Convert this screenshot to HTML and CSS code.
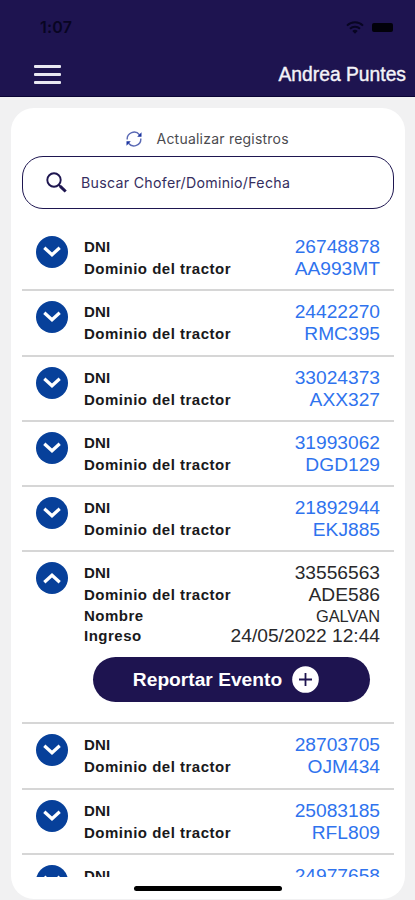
FILE: index.html
```html
<!DOCTYPE html>
<html lang="es">
<head>
<meta charset="utf-8">
<title>Registros</title>
<link rel="stylesheet" href="styles.css">
</head>
<body>
<svg class="defs" width="0" height="0">
  <symbol id="down" viewBox="0 0 32 32"><circle cx="16" cy="16" r="16" fill="#07409a"/><path d="M8.3 11.700 16 18.800l7.700-7.100" fill="none" stroke="#fff" stroke-width="3.200"/></symbol>
  <symbol id="up" viewBox="0 0 32 32"><circle cx="16" cy="16" r="16" fill="#07409a"/><path d="M8.300 20.300 16 13.200l7.700 7.100" fill="none" stroke="#fff" stroke-width="3.200"/></symbol>
</svg>
<header class="header">
  <div class="status">
    <span class="time">1:07</span>
    <span class="indicators">
      <svg class="wifi" width="18" height="13" viewBox="0 0 18 13" fill="none" stroke="#080522" stroke-width="2"><path d="M1 4.600a11.500 11.500 0 0 1 16 0M4 7.800a7.200 7.200 0 0 1 10 0"/><path d="M6.300 10a3.800 3.800 0 0 1 5.400 0L9 12.700z" fill="#080522" stroke="none"/></svg>
      <span class="battery"></span>
    </span>
  </div>
  <div class="bar">
    <div class="menu"><span></span><span></span><span></span></div>
    <span class="user">Andrea Puntes</span>
  </div>
</header>
<main class="card">
  <div class="refresh">
    <svg width="16" height="16" viewBox="0 0 16 16" fill="none" stroke="#5a69b4" stroke-width="1.400"><path d="M1.200 8.500A6.900 6.900 0 0 1 13.500 3.800M14.800 7.500A6.900 6.900 0 0 1 2.500 12.200"/><path d="M15.500 1.300v4.500h-4.300zM.5 14.700v-4.500h4.300z" fill="#1c35a0" stroke="none"/></svg>
    <span>Actualizar registros</span>
  </div>
  <div class="search">
    <svg width="21" height="21" viewBox="0 0 21 21" fill="none" stroke="#1e1650"><circle cx="8" cy="8" r="6.700" stroke-width="1.900"/><path d="m12.700 12.700 2 2" stroke-width="2"/><path d="m14.300 14.300 5.400 5.200" stroke-width="3"/></svg>
    <span>Buscar Chofer/Dominio/Fecha</span>
  </div>
  <div class="list">
    <div class="row"><svg class="toggle"><use href="#down"/></svg><div class="fields"><p><b>DNI</b><span>26748878</span></p><p><b class="wide">Dominio del tractor</b><span>AA993MT</span></p></div></div>
    <div class="row"><svg class="toggle"><use href="#down"/></svg><div class="fields"><p><b>DNI</b><span>24422270</span></p><p><b class="wide">Dominio del tractor</b><span>RMC395</span></p></div></div>
    <div class="row"><svg class="toggle"><use href="#down"/></svg><div class="fields"><p><b>DNI</b><span>33024373</span></p><p><b class="wide">Dominio del tractor</b><span>AXX327</span></p></div></div>
    <div class="row"><svg class="toggle"><use href="#down"/></svg><div class="fields"><p><b>DNI</b><span>31993062</span></p><p><b class="wide">Dominio del tractor</b><span>DGD129</span></p></div></div>
    <div class="row"><svg class="toggle"><use href="#down"/></svg><div class="fields"><p><b>DNI</b><span>21892944</span></p><p><b class="wide">Dominio del tractor</b><span>EKJ885</span></p></div></div>
    <div class="row open">
      <svg class="toggle"><use href="#up"/></svg>
      <div class="fields"><p><b>DNI</b><span>33556563</span></p><p><b class="wide">Dominio del tractor</b><span>ADE586</span></p><p class="tight"><b class="wide">Nombre</b><span class="name">GALVAN</span></p><p class="tight"><b class="wide">Ingreso</b><span class="date">24/05/2022 12:44</span></p></div>
      <div class="report"><span>Reportar Evento</span><svg width="27" height="27" viewBox="0 0 27 27"><circle cx="13.500" cy="13.500" r="13.300" fill="#fff"/><path d="M13.500 7v13M7 13.500h13" stroke="#1e1450" stroke-width="1.800"/></svg></div>
    </div>
    <div class="row"><svg class="toggle"><use href="#down"/></svg><div class="fields"><p><b>DNI</b><span>28703705</span></p><p><b class="wide">Dominio del tractor</b><span>OJM434</span></p></div></div>
    <div class="row"><svg class="toggle"><use href="#down"/></svg><div class="fields"><p><b>DNI</b><span>25083185</span></p><p><b class="wide">Dominio del tractor</b><span>RFL809</span></p></div></div>
    <div class="row"><svg class="toggle"><use href="#down"/></svg><div class="fields"><p><b>DNI</b><span>24977658</span></p></div></div>
  </div>
  <div class="home"></div>
</main>
</body>
</html>
```
FILE: styles.css
```css
* { box-sizing: border-box; }
body {
  margin: 0;
  height: 900px;
  overflow: hidden;
  background: #f1f1f2;
  font-family: "Liberation Sans", Arial, sans-serif;
  color: #1c1c1e;
}
.defs { display: none; }
.header { height: 97px; background: #1e1450; border-bottom: 1px solid #0b0435; }
.status { height: 54px; padding: 0 22px 0 40px; display: flex; align-items: center; justify-content: space-between; }
.time { font: 600 16px/18px Inter, sans-serif; color: #080522; letter-spacing: 0.2px; }
.indicators { display: flex; align-items: center; gap: 8px; }
.battery { width: 21px; height: 9px; background: #02010a; border-radius: 2px; }
.bar { height: 40px; padding: 0 9px 0 34px; display: flex; align-items: center; justify-content: space-between; }
.menu { display: grid; gap: 5px; width: 27px; }
.menu span { height: 3px; background: #e9e8f2; border-radius: 1px; }
.user { margin-top: 1px; font-size: 19.300px; color: #f4f3f8; -webkit-text-stroke: 0.4px #f4f3f8; }
.card {
  margin: 11px 10px 0 11px;
  height: 791px;
  padding: 21px 11px 0;
  background: #fff;
  border-radius: 23px;
  display: flex;
  flex-direction: column;
}
.refresh { height: 20px; padding-left: 104px; display: flex; align-items: center; gap: 14.500px; font: 14px/20px Inter, sans-serif; letter-spacing: 0.220px; color: #4b4b4f; }
.search {
  height: 53px;
  margin-top: 7px;
  padding-left: 23px;
  border: 1.5px solid #1e1650;
  border-radius: 21px;
  display: flex;
  align-items: center;
  gap: 14px;
  font: 14.200px/20px Inter, sans-serif;
  letter-spacing: 0.280px;
  color: #352e60;
}
.search span { margin-top: 1px; }
.list { height: 651px; margin-top: 17px; overflow: hidden; }
.row {
  height: 65.300px;
  padding: 10px 14px 0;
  border-bottom: 2px solid #d6d6d6;
  display: grid;
  grid-template-columns: 32px 1fr;
  column-gap: 16px;
  align-content: start;
}
.toggle { width: 32px; height: 32px; }
.fields { display: grid; }
.fields p { margin: 0; height: 22px; display: flex; align-items: center; justify-content: space-between; line-height: 22px; }
.fields .tight { height: 20px; line-height: 20px; }
.fields b { font-size: 15px; letter-spacing: 0.200px; color: #19191b; }
.fields .wide { letter-spacing: 0.500px; }
.fields span { font-size: 19.200px; color: #2f73ee; }
.open { height: 171.800px; }
.open .fields span { color: #29292b; }
.open .fields .name { font-size: 16.400px; }
.open .fields .date { font-size: 19.200px; }
.report {
  grid-column: 1 / -1;
  width: 277px;
  height: 45px;
  margin: 11px 0 0 56.500px;
  border-radius: 23px;
  background: #1e1450;
  color: #fff;
  display: flex;
  align-items: center;
  justify-content: center;
  gap: 10px;
  padding-right: 10px;
  font-size: 19.200px;
  font-weight: 700;
}
.home { width: 148px; height: 5px; margin: 9px 0 0 112px; background: #000; border-radius: 3px; }
```
